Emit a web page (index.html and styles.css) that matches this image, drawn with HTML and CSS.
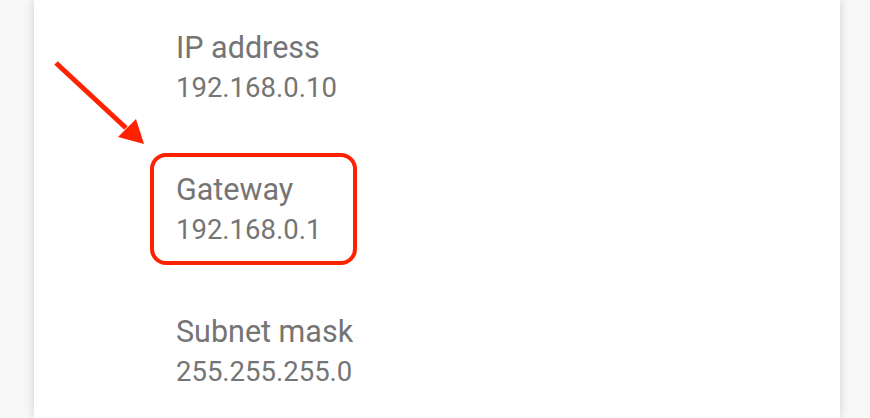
FILE: index.html
```html
<!DOCTYPE html>
<html>
<head>
<meta charset="utf-8">
<link rel="stylesheet" href="styles.css">
</head>
<body>
<div class="page">
  <div class="card">
    <div class="item">
      <div class="title">IP address</div>
      <div class="value">192.168.0.10</div>
    </div>
    <div class="item">
      <div class="title">Gateway</div>
      <div class="value">192.168.0.1</div>
    </div>
    <div class="item">
      <div class="title">Subnet mask</div>
      <div class="value">255.255.255.0</div>
    </div>
  </div>
  <div class="highlight"></div>
  <svg class="arrow" width="160" height="160" viewBox="0 0 160 160">
    <line x1="56" y1="63" x2="126" y2="128" stroke="#ff2200" stroke-width="5" stroke-linecap="butt"/>
    <polygon points="144,144 118,137 136,119" fill="#ff2200"/>
  </svg>
</div>
</body>
</html>
```
FILE: styles.css
```css
html, body {
  margin: 0;
  padding: 0;
  background: #f8f8f8;
}
.page {
  position: relative;
  width: 870px;
  height: 418px;
  overflow: hidden;
}
.card {
  margin-left: 34px;
  width: 806px;
  height: 418px;
  background: #ffffff;
  box-shadow: 0 0 10px rgba(0, 0, 0, 0.16);
  display: flex;
  flex-direction: column;
  padding-top: 30px;
  box-sizing: border-box;
  overflow: hidden;
}
.item {
  flex: 0 0 142px;
  padding-left: 142px;
  display: flex;
  flex-direction: column;
  gap: 6px;
  font-family: Roboto, "Liberation Sans", sans-serif;
  color: #757575;
}
.title {
  font-size: 30.5px;
  line-height: 36px;
}
.value {
  font-size: 27.5px;
  line-height: 32px;
}
.highlight {
  position: absolute;
  left: 150px;
  top: 153px;
  width: 207px;
  height: 112px;
  box-sizing: border-box;
  border: 4px solid #ff2200;
  border-radius: 16px;
}
.arrow {
  position: absolute;
  left: 0;
  top: 0;
}
```
